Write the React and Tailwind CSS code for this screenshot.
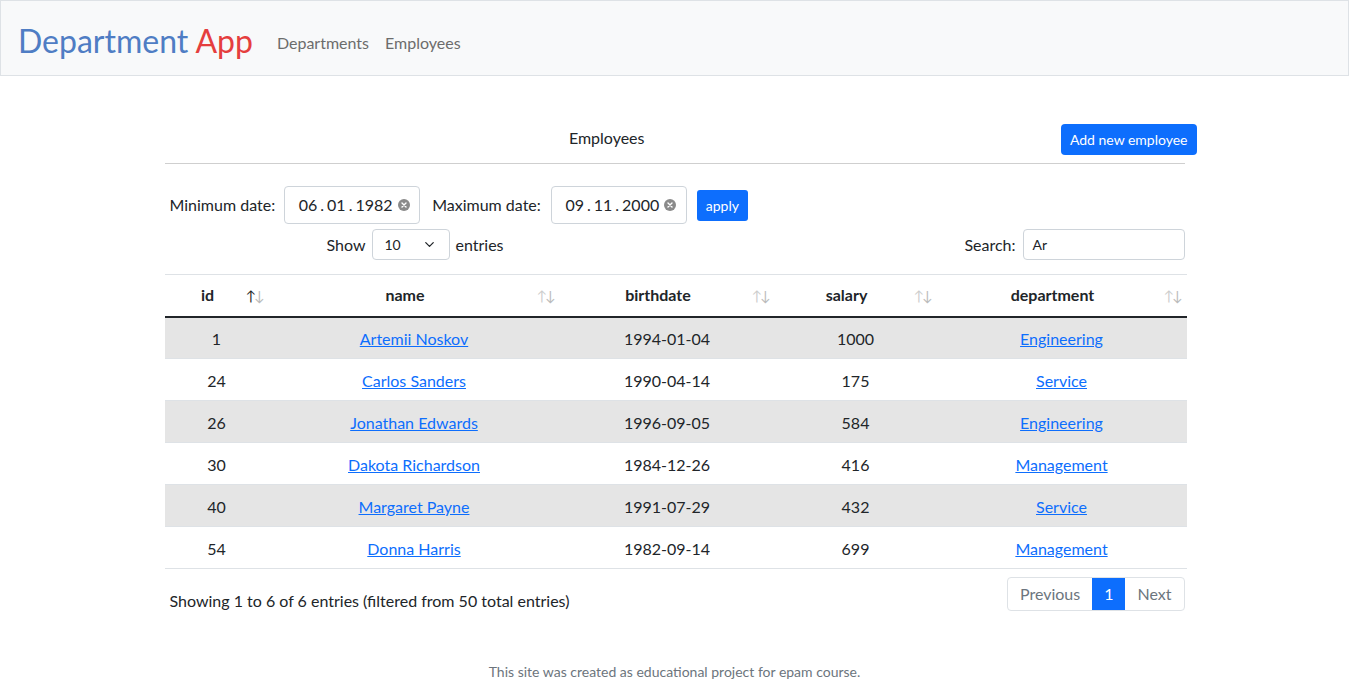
import React from 'react';
import { ChevronDown } from 'lucide-react';

const rows = [
  { id: 1, name: 'Artemii Noskov', birth: '1994-01-04', salary: 1000, dept: 'Engineering' },
  { id: 24, name: 'Carlos Sanders', birth: '1990-04-14', salary: 175, dept: 'Service' },
  { id: 26, name: 'Jonathan Edwards', birth: '1996-09-05', salary: 584, dept: 'Engineering' },
  { id: 30, name: 'Dakota Richardson', birth: '1984-12-26', salary: 416, dept: 'Management' },
  { id: 40, name: 'Margaret Payne', birth: '1991-07-29', salary: 432, dept: 'Service' },
  { id: 54, name: 'Donna Harris', birth: '1982-09-14', salary: 699, dept: 'Management' },
];

const SortIcon = ({ active }) => (
  <span className="absolute right-[6px] top-1/2 -translate-y-1/2 text-[14px] font-normal tracking-[-2px]">
    <span className={active ? 'text-[#222]' : 'text-[#ccc]'}>↑</span>
    <span className="text-[#bbb]">↓</span>
  </span>
);

const ClearIcon = () => (
  <svg width="12" height="12" viewBox="0 0 12 12" className="ml-[5px]">
    <circle cx="6" cy="6" r="6" fill="#8a8a8a" />
    <path d="M4 4 L8 8 M8 4 L4 8" stroke="#fff" strokeWidth="1.4" strokeLinecap="round" />
  </svg>
);

const DateInput = ({ parts }) => (
  <div className="flex h-[38px] w-[136px] items-center justify-center rounded-[4px] border border-[#ced4da] bg-white pl-[4px] text-[16px] text-[#212529]">
    <span className="flex">
      {parts.map((p, i) => (
        <React.Fragment key={i}>
          {i > 0 && <span className="mx-[3px]">.</span>}
          <span>{p}</span>
        </React.Fragment>
      ))}
    </span>
    <ClearIcon />
  </div>
);

export default function App() {
  const cols = [
    { key: 'id', label: 'id', w: 'w-[104px]' },
    { key: 'name', label: 'name', w: 'w-[291px]' },
    { key: 'birth', label: 'birthdate', w: 'w-[215px]' },
    { key: 'salary', label: 'salary', w: 'w-[162px]' },
    { key: 'dept', label: 'department', w: 'w-[250px]' },
  ];

  return (
    <div className="min-h-[682px] bg-white font-['Lato',sans-serif] text-[#212529]">
      <nav className="flex h-[76px] items-center border border-[#dee2e6] bg-[#f8f9fa] px-[17px] pt-[6px]">
        <span className="text-[32px] leading-none">
          <span className="text-[#4f7dc4]">Department</span>{' '}
          <span className="text-[#e53e3e]">App</span>
        </span>
        <div className="ml-[24px] mt-[4px] flex gap-[16px] text-[16px] text-[#6c6c6c]">
          <span>Departments</span>
          <span>Employees</span>
        </div>
      </nav>

      <div className="mx-auto mt-[48px] w-[1032px] pl-[6px]">
        <div className="w-[1020px]">
          <div className="flex h-[39px] items-start">
            <div className="flex-1 pt-[2px] text-center text-[16px]">Employees</div>
            <button className="mr-[-12px] ml-[12px] h-[31px] rounded-[4px] bg-[#0d6efd] px-[9px] text-[14px] text-white">
              Add new employee
            </button>
          </div>
          <div className="h-px bg-[#cfcfcf]" />
        </div>

        <div className="mt-[22px] flex items-center gap-[10px] pl-[5px] text-[16px]">
          <span className="mr-[-1px]">Minimum date:</span>
          <DateInput parts={['06', '01', '1982']} />
          <span className="ml-[2px]">Maximum date:</span>
          <DateInput parts={['09', '11', '2000']} />
          <button className="h-[31px] rounded-[3px] bg-[#0d6efd] px-[9px] text-[14px] text-white">apply</button>
        </div>

        <div className="mt-[5px] flex w-[1020px] items-center justify-between text-[16px]">
          <div className="ml-[162px] flex items-center gap-[6px]">
            <span>Show</span>
            <div className="flex h-[31px] w-[78px] items-center justify-between rounded-[4px] border border-[#ced4da] px-[12px] text-[14px]">
              <span>10</span>
              <ChevronDown size={15} strokeWidth={2} />
            </div>
            <span>entries</span>
          </div>
          <div className="flex items-center gap-[7px]">
            <span>Search:</span>
            <div className="flex h-[31px] w-[162px] items-center rounded-[4px] border border-[#ced4da] px-[9px] text-[14px]">Ar</div>
          </div>
        </div>

        <table className="mt-[14px] w-[1022px] border-collapse text-[16px]">
          <thead>
            <tr className="h-[42px] border-t border-b-2 border-t-[#dee2e6] border-b-[#212529]">
              {cols.map((c, i) => (
                <th key={c.key} className={`relative ${c.w} pr-[26px] pl-[8px] text-center font-bold`}>
                  {c.label}
                  <SortIcon active={i === 0} />
                </th>
              ))}
            </tr>
          </thead>
          <tbody>
            {rows.map((r, i) => (
              <tr key={r.id} className={`h-[42px] border-b border-[#dee2e6] ${i % 2 === 0 ? 'bg-[#e5e5e5]' : 'bg-white'}`}>
                <td className="pt-[2px] text-center">{r.id}</td>
                <td className="pt-[2px] text-center">
                  <a href="#" className="text-[#0d6efd] underline">{r.name}</a>
                </td>
                <td className="pt-[2px] text-center">{r.birth}</td>
                <td className="pt-[2px] text-center">{r.salary}</td>
                <td className="pt-[2px] text-center">
                  <a href="#" className="text-[#0d6efd] underline">{r.dept}</a>
                </td>
              </tr>
            ))}
          </tbody>
        </table>

        <div className="mt-[8px] flex w-[1020px] items-start justify-between">
          <span className="mt-[12px] pl-[5px] text-[16px]">Showing 1 to 6 of 6 entries (filtered from 50 total entries)</span>
          <div className="flex h-[34px] overflow-hidden rounded-[4px] border border-[#dee2e6] text-[16px]">
            <span className="flex items-center px-[12px] text-[#6c757d]">Previous</span>
            <span className="flex items-center bg-[#0d6efd] px-[12px] text-white">1</span>
            <span className="flex items-center px-[12px] text-[#6c757d]">Next</span>
          </div>
        </div>
      </div>

      <footer className="mt-[50px] text-center text-[14px] leading-[17px] text-[#6c757d]">
        This site was created as educational project for epam course.
      </footer>
    </div>
  );
}
